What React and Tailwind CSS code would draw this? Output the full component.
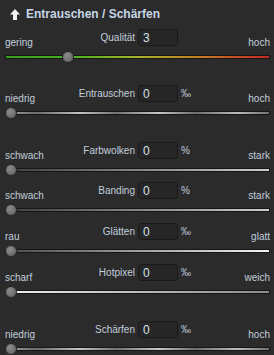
import React from 'react'

const rows = [
  {
    left: 'gering',
    label: 'Qualität',
    value: '3',
    unit: '',
    right: 'hoch',
    thumb: 'left-[57px]',
    track: 'bg-[linear-gradient(90deg,#34a01e,#48b020_25%,#a8b428_50%,#c47a24_75%,#c42626)]',
    gap: 'mb-[23px]',
  },
  {
    left: 'niedrig',
    label: 'Entrauschen',
    value: '0',
    unit: '‰',
    right: 'hoch',
    thumb: 'left-0',
    track: 'bg-[linear-gradient(90deg,#a0a0a0,#6c6c6c_12%,#c4c4c4_28%,#737373_42%,#c8c8c8_58%,#6e6e6e_72%,#bcbcbc_88%,#707070)]',
    gap: 'mb-[24px]',
  },
  {
    left: 'schwach',
    label: 'Farbwolken',
    value: '0',
    unit: '%',
    right: 'stark',
    thumb: 'left-0',
    track: 'bg-[linear-gradient(90deg,#3c3c3c,#cfcfcf)]',
    gap: 'mb-[7px]',
  },
  {
    left: 'schwach',
    label: 'Banding',
    value: '0',
    unit: '%',
    right: 'stark',
    thumb: 'left-0',
    track: 'bg-[linear-gradient(90deg,#3c3c3c,#cfcfcf)]',
    gap: 'mb-[8px]',
  },
  {
    left: 'rau',
    label: 'Glätten',
    value: '0',
    unit: '‰',
    right: 'glatt',
    thumb: 'left-0',
    track: 'bg-[linear-gradient(90deg,#4a4a4a,#f4f4f4)]',
    gap: 'mb-[8px]',
  },
  {
    left: 'scharf',
    label: 'Hotpixel',
    value: '0',
    unit: '‰',
    right: 'weich',
    thumb: 'left-0',
    track: 'bg-[linear-gradient(90deg,#f0f0f0,#8a8a8a)]',
    gap: 'mb-[24px]',
  },
  {
    left: 'niedrig',
    label: 'Schärfen',
    value: '0',
    unit: '‰',
    right: 'hoch',
    thumb: 'left-0',
    track: 'bg-[linear-gradient(90deg,#a0a0a0,#6c6c6c_12%,#c4c4c4_28%,#737373_42%,#c8c8c8_58%,#6e6e6e_72%,#bcbcbc_88%,#707070)]',
    gap: 'mb-0',
  },
]

const SliderRow = ({ row }) => (
  <div className={`flex flex-col ${row.gap}`}>
    <div className="flex h-[17px] items-center">
      <div className="flex w-[130px] h-full items-center justify-between">
        <span className="self-end -mb-[3px] text-[#c2cedb]">{row.left}</span>
        <span className="text-[#c2cedb]">{row.label}</span>
      </div>
      <div className="ml-[3px] w-[40px] h-[17px] rounded-[3px] border border-[#1a1a1a] bg-[#262626] pl-[4px] flex items-center text-[12px] text-[#d6e2ee]">
        {row.value}
      </div>
      <span className="ml-[3px] text-[#c2cedb]">{row.unit}</span>
      <span className="flex-1 self-end -mb-[3px] text-right text-[#c2cedb]">
        {row.right}
      </span>
    </div>
    <div className="relative mt-[5px] h-[11px] flex items-center">
      <div className={`w-full h-[4px] border border-[#161616] ${row.track}`} />
      <div
        className={`absolute -top-[0.5px] ${row.thumb} w-[12px] h-[12px] rounded-full border border-[#2a2a2a] bg-[radial-gradient(circle_at_40%_35%,#8c8c8c,#5c5c5c)]`}
      />
    </div>
  </div>
)

const App = () => {
  return (
    <div
      className="w-[274px] h-[355px] overflow-hidden bg-[#2b2b2b] text-[10px] leading-[12px]"
      style={{ fontFamily: '"Liberation Sans", Arial, sans-serif' }}
    >
      <div className="flex items-center h-[28px] pl-[10px] gap-[6px]">
        <svg width="10" height="11" viewBox="0 0 10 11">
          <path d="M5 0 L10 5.5 L7 5.5 L7 11 L3 11 L3 5.5 L0 5.5 Z" fill="#f2f2f2" />
        </svg>
        <span className="text-[12px] font-bold text-[#c6d6e6]">
          Entrauschen / Schärfen
        </span>
      </div>
      <div className="mt-[1px] pl-[5px] pr-[4px]">
        {rows.map((row, i) => (
          <SliderRow key={i} row={row} />
        ))}
      </div>
    </div>
  )
}

export default App
